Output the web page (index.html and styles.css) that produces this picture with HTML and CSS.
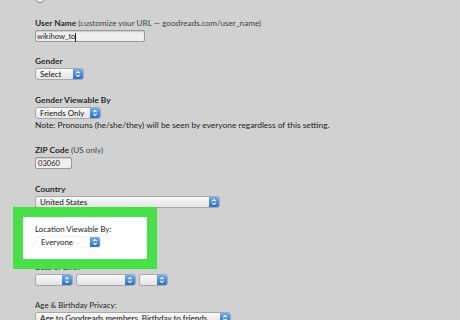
FILE: index.html
```html
<!DOCTYPE html>
<html lang="en">
<head>
    <meta charset="UTF-8">
    <meta name="viewport" content="width=device-width, initial-scale=1.0">
    <title>Edit Profile - Goodreads</title>
    <link rel="stylesheet" href="styles.css">
</head>
<body>
    <div class="settings-form">
        <div class="radio-row">
            <span class="radio"></span>
            <span>Friends</span>
        </div>

        <div class="field">
            <div class="field-label">User Name <span class="hint">(customize your URL &mdash; goodreads.com/user_name)</span></div>
            <div class="text-input username">wikihow_to<span class="caret"></span></div>
        </div>

        <div class="field field-tight">
            <div class="field-label">Gender</div>
            <div class="select gender-select">
                <span class="select-value">Select</span>
                <span class="select-arrows"><svg viewBox="0 0 10 12"><path d="M3 5 L5 3 L7 5 M3 7 L5 9 L7 7"/></svg></span>
            </div>
        </div>

        <div class="field">
            <div class="field-label">Gender Viewable By</div>
            <div class="select viewable-select">
                <span class="select-value">Friends Only</span>
                <span class="select-arrows"><svg viewBox="0 0 10 12"><path d="M3 5 L5 3 L7 5 M3 7 L5 9 L7 7"/></svg></span>
            </div>
            <div class="note">Note: Pronouns (he/she/they) will be seen by everyone regardless of this setting.</div>
        </div>

        <div class="field field-tight">
            <div class="field-label">ZIP Code <span class="hint">(US only)</span></div>
            <div class="text-input zip">03060</div>
        </div>

        <div class="field">
            <div class="field-label">Country</div>
            <div class="select country-select">
                <span class="select-value">United States</span>
                <span class="select-arrows"><svg viewBox="0 0 10 12"><path d="M3 5 L5 3 L7 5 M3 7 L5 9 L7 7"/></svg></span>
            </div>
        </div>

        <div class="field highlighted">
            <div class="field-label plain">Location Viewable By:</div>
            <div class="select location-select">
                <span class="select-value">Everyone</span>
                <span class="select-arrows"><svg viewBox="0 0 10 12"><path d="M3 5 L5 3 L7 5 M3 7 L5 9 L7 7"/></svg></span>
            </div>
        </div>

        <div class="field after-highlight">
            <div class="field-label plain">Date of Birth</div>
            <div class="date-row">
                <div class="select month-select">
                    <span class="select-value"></span>
                    <span class="select-arrows"><svg viewBox="0 0 10 12"><path d="M3 5 L5 3 L7 5 M3 7 L5 9 L7 7"/></svg></span>
                </div>
                <div class="select day-select">
                    <span class="select-value"></span>
                    <span class="select-arrows"><svg viewBox="0 0 10 12"><path d="M3 5 L5 3 L7 5 M3 7 L5 9 L7 7"/></svg></span>
                </div>
                <div class="select year-select">
                    <span class="select-value"></span>
                    <span class="select-arrows"><svg viewBox="0 0 10 12"><path d="M3 5 L5 3 L7 5 M3 7 L5 9 L7 7"/></svg></span>
                </div>
            </div>
        </div>

        <div class="field field-tight">
            <div class="field-label plain">Age &amp; Birthday Privacy:</div>
            <div class="select privacy-select">
                <span class="select-value">Age to Goodreads members, Birthday to friends</span>
                <span class="select-arrows"><svg viewBox="0 0 10 12"><path d="M3 5 L5 3 L7 5 M3 7 L5 9 L7 7"/></svg></span>
            </div>
        </div>
    </div>
</body>
</html>
```

FILE: styles.css
```css
body {
    margin: 0;
    background-color: #d1d1d1;
    font-family: Lato, "Open Sans", sans-serif;
    font-size: 8.4px;
    color: #222;
    overflow: hidden;
}

.settings-form {
    padding-left: 35px;
}

.radio-row {
    margin-top: -8px;
    height: 11px;
    line-height: 11px;
    display: flex;
    align-items: center;
    gap: 3px;
}

.radio {
    width: 8px;
    height: 8px;
    border: 1px solid #888;
    border-radius: 50%;
    background-color: #eee;
}

.field {
    margin-top: 15px;
}

.field-tight {
    margin-top: 14px;
}

.field-label {
    line-height: 11px;
    height: 11px;
    margin-bottom: 1px;
    font-weight: bold;
    color: #2a2a2a;
    white-space: nowrap;
}

.field-label.plain {
    font-weight: normal;
    font-size: 7.9px;
    color: #222;
}

.hint {
    font-weight: normal;
    font-size: 8.2px;
    color: #444;
}

.text-input {
    height: 12px;
    box-sizing: border-box;
    border: 1px solid #999;
    border-radius: 2px;
    background-color: #efefef;
    font-size: 7.6px;
    line-height: 10px;
    padding-left: 1px;
    box-shadow: inset 0 1px 1px rgba(0, 0, 0, 0.15);
}

.username {
    width: 110px;
}

.zip {
    width: 37px;
    padding-left: 2px;
}

.caret {
    display: inline-block;
    width: 1px;
    height: 9px;
    background-color: #222;
    vertical-align: middle;
}

.select {
    height: 12px;
    box-sizing: border-box;
    display: flex;
    border: 1px solid #a8a8a8;
    border-radius: 3px;
    background: linear-gradient(#fafafa, #e4e4e4);
    overflow: hidden;
}

.select-value {
    flex: 1;
    font-size: 8px;
    line-height: 10px;
    padding-left: 4px;
    white-space: nowrap;
    color: #111;
}

.select-arrows {
    width: 10px;
    background: linear-gradient(#6fb0f5, #2a6cd6);
}

.select-arrows svg {
    display: block;
    width: 10px;
    height: 10px;
    fill: none;
    stroke: white;
    stroke-width: 1.3;
}

.gender-select {
    width: 49px;
}

.viewable-select {
    width: 66px;
}

.country-select {
    width: 185px;
}

.note {
    line-height: 11px;
    margin-top: 1px;
}

.highlighted {
    position: relative;
    z-index: 1;
    margin-top: 9px;
    margin-left: -12px;
    width: 112px;
    padding: 7px 0 11px 12px;
    background-color: white;
    outline: 10px solid #48e048;
}

.location-select {
    width: 66px;
    border-color: #f4f4f4;
    background: white;
}

.location-select .select-value {
    padding-left: 5px;
    font-size: 7.8px;
}

.after-highlight {
    margin-top: 3px;
}

.date-row {
    display: flex;
    gap: 3px;
}

.month-select {
    width: 38px;
}

.day-select {
    width: 60px;
}

.year-select {
    width: 29px;
}

.privacy-select {
    width: 196px;
}
```
